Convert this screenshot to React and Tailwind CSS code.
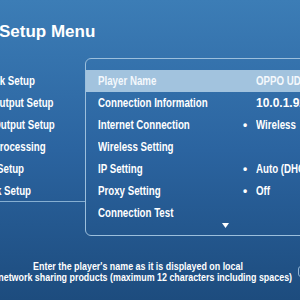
import React from 'react';

const leftItems = [
    'Playback Setup',
    'Video Output Setup',
    'Audio Output Setup',
    'Audio Processing',
    'Device Setup',
    'Network Setup',
];

const rows = [
    { label: 'Player Name', value: 'OPPO UDP-203', active: true },
    { label: 'Connection Information', value: '10.0.1.92', digits: true },
    { label: 'Internet Connection', value: 'Wireless', bullet: true },
    { label: 'Wireless Setting' },
    { label: 'IP Setting', value: 'Auto (DHCP)', bullet: true },
    { label: 'Proxy Setting', value: 'Off', bullet: true },
    { label: 'Connection Test' },
];

const sans = { fontFamily: '"Liberation Sans", Arial, sans-serif' };

// the OSD font is condensed, so text is squeezed horizontally
const Squeezed = ({ children }) => (
    <span className="inline-block origin-left scale-x-[0.81]">{children}</span>
);

const App = () => {
    return (
        <div className="w-[300px] h-[300px] overflow-hidden bg-gradient-to-b from-[#3c7db6] via-[#2b64a0] to-[#1d4c7e] text-white" style={sans}>
            <div className="w-[376px] -ml-[50px]">
                {/* title */}
                <div className="h-[58px] pt-[22px] pl-[49px] text-[17px] leading-[20px] font-bold whitespace-nowrap">
                    Setup Menu
                </div>

                <div className="flex items-start">
                    {/* left menu */}
                    <div className="w-[135px] shrink-0 pt-[12px]">
                        {leftItems.map((item, i) => (
                            <div
                                key={item}
                                className={`h-[22px] pl-[13px] flex items-center text-[12px] font-bold whitespace-nowrap ${i === leftItems.length - 1 ? 'border-b border-[#86afd2]' : ''}`}
                            >
                                <Squeezed>{item}</Squeezed>
                            </div>
                        ))}
                    </div>

                    {/* network panel */}
                    <div className="w-[280px] shrink-0 border border-[#9cbfdc] rounded-[6px] pt-[11px] pb-[6px]">
                        {rows.map((row) => (
                            <div
                                key={row.label}
                                className={`h-[22px] flex items-center text-[12px] font-bold whitespace-nowrap ${row.active ? 'bg-[#a2c3de] text-[#f4f8fc]' : ''}`}
                            >
                                <span className="w-[156px] pl-[12px]">
                                    <Squeezed>{row.label}</Squeezed>
                                </span>
                                <span className="w-[14px] pl-[1px]">{row.bullet ? '•' : ''}</span>
                                {row.digits ? (
                                    <span>{row.value}</span>
                                ) : (
                                    <span>
                                        <Squeezed>{row.value}</Squeezed>
                                    </span>
                                )}
                            </div>
                        ))}
                        <div className="-mt-[1px] h-[6px] flex justify-center">
                            <svg width="7" height="5" viewBox="0 0 7 5">
                                <path d="M0 0h7L3.5 5z" fill="#ffffff" />
                            </svg>
                        </div>
                    </div>
                </div>

                {/* help text */}
                <div className="flex items-start mt-[25px]">
                    <div className="w-[314px] ml-[31px] shrink-0 text-center text-[10px] leading-[11px] font-bold whitespace-nowrap scale-x-[0.89]">
                        <div>Enter the player's name as it is displayed on local</div>
                        <div>network sharing products (maximum 12 characters including spaces)</div>
                    </div>
                    <div className="ml-[3px] mt-[5px] w-[12px] h-[11px] shrink-0 border border-[#8fb3d3] rounded-[3px]" />
                </div>
            </div>
        </div>
    );
};

export default App;
